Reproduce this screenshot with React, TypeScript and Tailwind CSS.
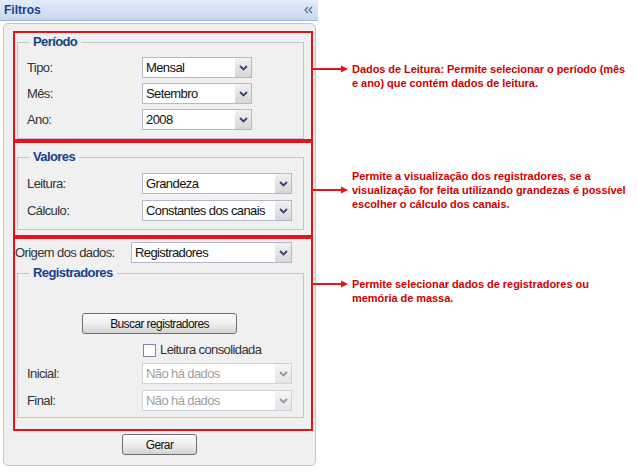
import React from "react";

const font = "font-['Liberation_Sans',Arial,sans-serif]";

function Chevron({ faded = false }: { faded?: boolean }) {
  return (
    <svg width="9" height="6" viewBox="0 0 9 6">
      <path
        d="M1 1 L4.5 4.5 L8 1"
        fill="none"
        stroke={faded ? "#8a97ad" : "#33476e"}
        strokeWidth="1.8"
      />
    </svg>
  );
}

function Combo({
  value,
  width,
  disabled = false,
}: {
  value: string;
  width: string;
  disabled?: boolean;
}) {
  return (
    <div
      className={`flex h-[21px] ${width} border ${
        disabled ? "border-[#cfd2dc]" : "border-[#b5b8c8]"
      } bg-white`}
    >
      <div
        className={`flex flex-1 items-center pl-[3px] ${
          disabled ? "text-[#a0a0a0]" : "text-[#111]"
        }`}
      >
        {value}
      </div>
      <div
        className={`flex w-[16px] items-center justify-center bg-gradient-to-b ${
          disabled ? "from-[#f6f6f6] to-[#e4e4e4]" : "from-[#f2f2f2] to-[#d6d6d6]"
        }`}
      >
        <Chevron faded={disabled} />
      </div>
    </div>
  );
}

function Row({
  label,
  value,
  width,
  disabled,
}: {
  label: string;
  value: string;
  width: string;
  disabled?: boolean;
}) {
  return (
    <div className="flex h-[21px] items-center">
      <span className="w-[115px] text-[#333]">{label}</span>
      <Combo value={value} width={width} disabled={disabled} />
    </div>
  );
}

function Legend({ children }: { children: React.ReactNode }) {
  return (
    <legend className="ml-[2px] px-[4px] text-[13px] font-bold leading-[16px] text-[#15428b]">
      {children}
    </legend>
  );
}

function Arrow() {
  return (
    <div className="flex h-[14px] w-[41px] shrink-0 items-center">
      <svg width="37" height="8" viewBox="0 0 37 8">
        <rect x="0" y="3" width="32" height="2" fill="#e3141c" />
        <polygon points="30,0.5 37,4 30,7.5" fill="#e3141c" />
      </svg>
    </div>
  );
}

const note =
  "whitespace-nowrap font-['Liberation_Sans',Arial,sans-serif] text-[11px] font-bold leading-[14px] tracking-[-0.05px] text-[#cf0000]";

function Button({ label, width }: { label: string; width: string }) {
  return (
    <button
      className={`flex h-[21px] ${width} items-center justify-center rounded-[3px] border border-[#6f6f6f] bg-gradient-to-b from-[#fdfdfd] via-[#efefef] to-[#d2d2d2] text-[12px] text-[#111]`}
    >
      {label}
    </button>
  );
}

export default function App() {
  return (
    <div className={`h-[472px] w-[638px] bg-white ${font} text-[13px] tracking-[-0.6px]`}>
      <div className="w-[318px]">
        {/* cabeçalho */}
        <div className="flex h-[21px] items-center justify-between border-b border-[#99bbe8] bg-gradient-to-b from-[#e3ecf7] to-[#c7d8ee] pl-[4px] pr-[5px]">
          <span className="text-[12px] font-bold tracking-normal text-[#15428b]">Filtros</span>
          <svg width="9" height="8" viewBox="0 0 9 8">
            <path d="M4 1 L1 4 L4 7 M8 1 L5 4 L8 7" fill="none" stroke="#4d6fa8" strokeWidth="1.3" />
          </svg>
        </div>

        <div className="ml-[3px] mr-[2px] mt-[2px] flex h-[443px] flex-col rounded-[5px] border border-[#c6c6c6] bg-[#f0f0f0]">
          {/* Período */}
          <div className="relative ml-[9px] mr-[2px] mt-[7px] h-[110px] border-2 border-[#e3141c]">
            <fieldset className="ml-[2px] mr-[7px] mt-[1px] border border-[#c2c5d0] pb-[8px] pl-[9px]">
              <Legend>Período</Legend>
              <div className="mt-[7px] flex flex-col gap-[5px]">
                <Row label="Tipo:" value="Mensal" width="w-[110px]" />
                <Row label="Mês:" value="Setembro" width="w-[110px]" />
                <Row label="Ano:" value="2008" width="w-[110px]" />
              </div>
            </fieldset>
            <div className="absolute left-full top-[29px] flex items-start">
              <Arrow />
              <p className={note}>
                Dados de Leitura: Permite selecionar o período (mês
                <br />e ano) que contém dados de leitura.
              </p>
            </div>
          </div>

          {/* Valores */}
          <div className="relative ml-[9px] mr-[2px] h-[96px] border-2 border-[#e3141c]">
            <fieldset className="ml-[2px] mr-[7px] mt-[6px] border border-[#c2c5d0] pb-[8px] pl-[9px]">
              <Legend>Valores</Legend>
              <div className="mt-[8px] flex flex-col gap-[6px]">
                <Row label="Leitura:" value="Grandeza" width="w-[150px]" />
                <Row label="Cálculo:" value="Constantes dos canais" width="w-[150px]" />
              </div>
            </fieldset>
            <div className="absolute left-full top-[26px] flex items-start">
              <div className="mt-[14px]">
                <Arrow />
              </div>
              <p className={note}>
                Permite a visualização dos registradores, se a
                <br />
                visualização for feita utilizando grandezas é possível
                <br />
                escolher o cálculo dos canais.
              </p>
            </div>
          </div>

          {/* Origem / Registradores */}
          <div className="relative ml-[9px] mr-[2px] h-[194px] border-2 border-[#e3141c]">
            <div className="mt-[3px] flex h-[21px] items-center">
              <span className="w-[116px] text-[#333]">Origem dos dados:</span>
              <Combo value="Registradores" width="w-[161px]" />
            </div>
            <fieldset className="ml-[2px] mr-[7px] mt-[2px] border border-[#c2c5d0] pb-[6px] pl-[9px]">
              <Legend>Registradores</Legend>
              <div className="ml-[55px] mt-[32px]">
                <Button label="Buscar registradores" width="w-[155px]" />
              </div>
              <div className="ml-[116px] mt-[9px] flex h-[14px] items-center gap-[4px]">
                <span className="h-[13px] w-[13px] border border-[#7a8aa6] bg-white" />
                <span className="text-[#333]">Leitura consolidada</span>
              </div>
              <div className="mt-[6px] flex flex-col gap-[6px]">
                <Row label="Inicial:" value="Não há dados" width="w-[150px]" disabled />
                <Row label="Final:" value="Não há dados" width="w-[150px]" disabled />
              </div>
            </fieldset>
            <div className="absolute left-full top-[38px] flex items-start">
              <Arrow />
              <p className={note}>
                Permite selecionar dados de registradores ou
                <br />
                memória de massa.
              </p>
            </div>
          </div>

          <div className="mt-[3px] flex justify-center">
            <Button label="Gerar" width="w-[75px]" />
          </div>
        </div>
      </div>
    </div>
  );
}
